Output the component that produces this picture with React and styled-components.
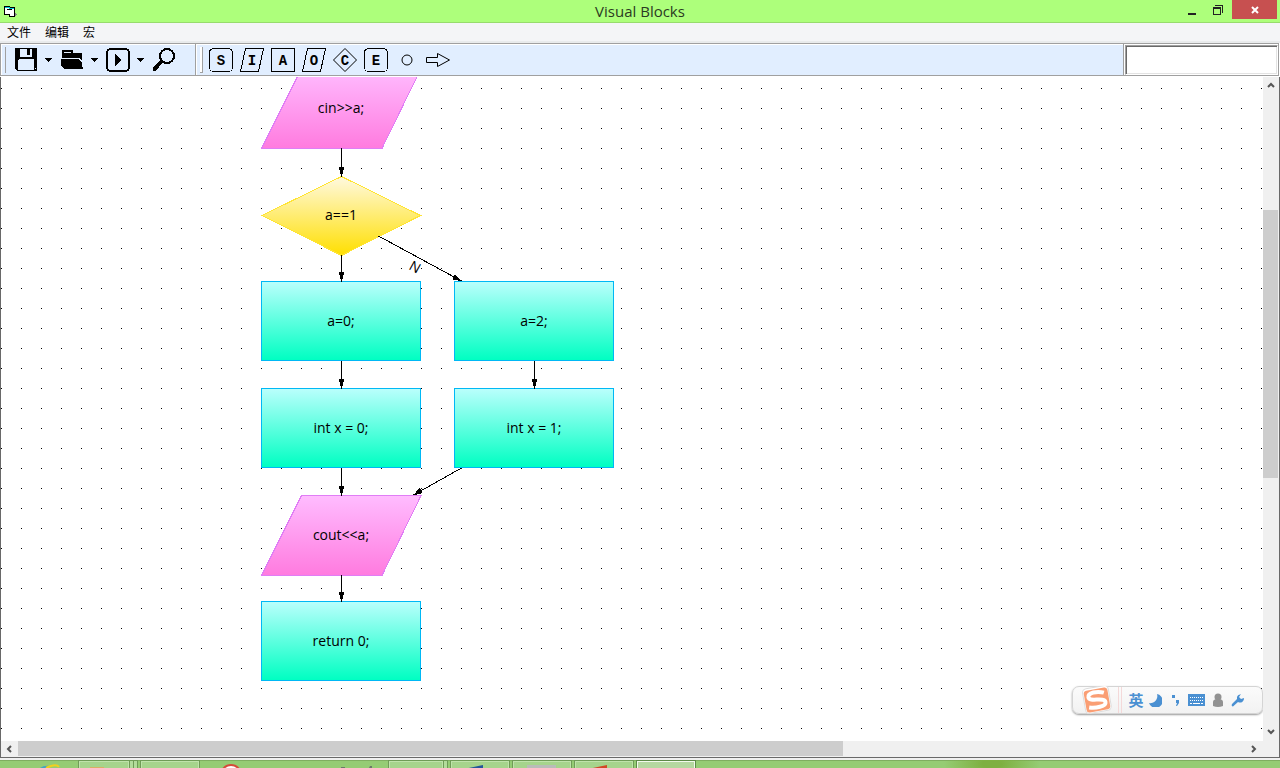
import React from "react";
import styled, { createGlobalStyle, css } from "styled-components";

const ui = '"Open Sans", "Noto Sans", "Noto Sans CJK SC", sans-serif';

const GlobalStyle = createGlobalStyle`
  * { box-sizing: border-box; }
  body { margin: 0; background: #fff; color: #000; font: 12px/18px ${ui}; }
  button, input { font: inherit; color: inherit; }
  button { padding: 0; border: 0; background: none; }
  svg { display: block; }
`;

const Window = styled.div`
  display: flex;
  flex-direction: column;
  height: 100vh;
  overflow: hidden;
`;

const TitleBar = styled.header`
  display: grid;
  grid-template-columns: 1fr auto 1fr;
  flex: none;
  height: 23px;
  padding: 0 3px;
  background: #adff7b;
  border-bottom: 1px solid #97dc6d;
`;

const AppIcon = styled.div`
  padding-top: 4px;
`;

const Title = styled.h1`
  margin: 0;
  font-size: 15px;
  font-weight: 400;
  line-height: 22px;
  color: #2b3a22;
`;

const WindowControls = styled.div`
  display: flex;
  justify-content: flex-end;
`;

const ControlButton = styled.button`
  width: ${(p) => (p.$close ? 45 : 26)}px;
  height: 19px;
  padding-right: ${(p) => (p.$close ? 0 : 2)}px;
  background: ${(p) => (p.$close ? "#c75050" : "transparent")};
  svg { margin: 0 auto; }
`;

const MenuBar = styled.nav`
  display: flex;
  flex: none;
  height: 20px;
  background: #f4f5f7;
  border-bottom: 2px solid #e9ebec;
`;

const MenuItem = styled.button`
  padding: 0 7px;
  font-size: 12px;
  line-height: 20px;
`;

const ToolBar = styled.div`
  display: flex;
  flex: none;
  height: 33px;
  margin: 0 1px 1px 0;
  border: 1px solid #a0a0a0;
  background: #e1eeff;
`;

const Band = styled.div`
  display: flex;
  align-items: center;
  flex: ${(p) => (p.$grow ? "1" : "none")};
  padding: 0 26px 0 3px;
  border: solid #fff;
  border-width: 1px 0 0 1px;
  ${(p) => !p.$grow && css`width: 194px;`}
`;

const BandEnd = styled.div`
  width: 1px;
  background: #a0a0a0;
`;

const Grip = styled.div`
  width: 3px;
  height: 26px;
  margin-right: ${(p) => p.$space}px;
  border: solid #a0a0a0;
  border-width: 0 1px 1px 0;
  background: #fff;
`;

const ToolButton = styled.button`
  flex: none;
  width: 24px;
  height: 24px;
`;

const ShapeSlot = styled.div`
  display: flex;
  flex: none;
  width: 31px;
`;

const CaretButton = styled.button`
  flex: none;
  width: 22px;
  height: 24px;
  padding-right: 2px;
  svg { margin: 0 auto; }
`;

const SearchWrap = styled.div`
  flex: none;
  width: 154px;
  padding: 1px 0 0 1px;
  background: #fff;
`;

const SearchInput = styled.input`
  display: block;
  width: 100%;
  height: 30px;
  padding: 0 4px;
  border: 1px solid;
  border-color: #a0a0a0 #fff #fff #a0a0a0;
  box-shadow: inset 1px 1px #696969, inset -1px -1px #e3e3e3;
  outline: 0;
  background: #fff;
`;

const Workspace = styled.main`
  display: grid;
  flex: 1;
  min-height: 0;
  grid-template: minmax(0, 1fr) 16px / minmax(0, 1fr) 16px;
  border: solid #696969;
  border-width: 0 1px 1px;
  background: #f0f0f0;
`;

const Canvas = styled.section`
  position: relative;
  overflow: hidden;
  background: #fff;
`;

const Layer = styled.svg`
  position: absolute;
  inset: 0;
  width: 100%;
  height: 100%;
`;

const Node = styled.div`
  position: absolute;
  left: ${(p) => p.$x}px;
  top: ${(p) => p.$y}px;
  display: flex;
  align-items: center;
  justify-content: center;
  width: 160px;
  height: 80px;
  font-size: 14px;
  line-height: 18px;
  ${(p) => p.$kind === "process" && css`
    border: 1px solid #00b8f5;
    background: linear-gradient(#b9fffc, #00ffc2);
  `}
`;

const NodeText = styled.span`
  position: relative;
`;

const ScrollBar = styled.div`
  display: flex;
  flex-direction: ${(p) => (p.$vertical ? "column" : "row")};
  padding: ${(p) => (p.$vertical ? "0 1px 0 0" : "0 0 1px")};
`;

const ScrollButton = styled.button`
  display: flex;
  align-items: center;
  justify-content: center;
  flex: none;
  width: ${(p) => (p.$vertical ? 15 : 17)}px;
  height: ${(p) => (p.$vertical ? 17 : 15)}px;
  padding: ${(p) => (p.$vertical ? "0 0 2px" : "0 2px 0 0")};
`;

const Track = styled.div`
  display: flex;
  flex-direction: ${(p) => (p.$vertical ? "column" : "row")};
  flex: 1;
`;

const Gap = styled.div`
  flex: ${(p) => p.$share};
`;

const Thumb = styled.div`
  flex: ${(p) => p.$share};
  background: #cdcdcd;
`;

const ImeBar = styled.div`
  position: absolute;
  right: 0;
  bottom: 27px;
  display: flex;
  align-items: center;
  width: 191px;
  height: 28px;
  padding-left: 7px;
  border: 1px solid #d4d4d4;
  border-radius: 7px;
  background: linear-gradient(#fbfbfb, #f2f2f2);
  box-shadow: 0 1px 2px #999;
  color: #4a90d2;
`;

const ImeDivider = styled.div`
  width: 4px;
  height: 26px;
  margin: 0 6px 0 4px;
  border: solid #f4d9d9;
  border-width: 0 1px;
`;

const ImeButton = styled.button`
  display: flex;
  align-items: center;
  justify-content: center;
  width: ${(p) => p.$width}px;
  height: 24px;
  font: 700 15px/24px "Noto Sans CJK SC", sans-serif;
  color: #4a90d2;
`;

const TaskBar = styled.footer`
  display: flex;
  gap: 2px;
  flex: none;
  height: 10px;
  padding-left: 16px;
  overflow: hidden;
  border-top: 2px solid #f0f0f0;
  background:
    radial-gradient(ellipse 48px 20px at 992px 4px, #7eb041 20%, transparent),
    linear-gradient(#7fae60 1px, #95cc74 1px);
`;

const frame = {
  none: "",
  open: css`
    border: 1px solid #6f9c56;
    background: #a6d48c;
    box-shadow: inset 0 0 0 1px #bfe3aa;
  `,
  active: css`
    border: 1px solid #5d8a47;
    background: #b5d8a0;
    box-shadow: inset 0 0 0 1px #f2faec;
  `,
};

const TaskButton = styled.button`
  display: flex;
  justify-content: center;
  flex: none;
  width: 60px;
  height: 40px;
  ${(p) => frame[p.$state]}
`;

const StackedTask = styled.div`
  display: flex;
  flex: none;
  width: 60px;
  height: 40px;
`;

const StackTab = styled.span`
  width: 4px;
  border: solid #6f9c56;
  border-width: 1px 1px 0 0;
  background: #b3dc9b;
`;

const StackFront = styled(TaskButton)`
  width: ${(p) => (p.$tabs === 2 ? 52 : 56)}px;
`;

function Caret() {
  return (
    <svg width="7" height="4" shapeRendering="crispEdges" aria-hidden="true">
      <path d="M0 0h7v1H0zM1 1h5v1H1zM2 2h3v1H2zM3 3h1v1H3z" />
    </svg>
  );
}

function Icon({ children, crisp = true }) {
  return (
    <svg width="24" height="24" viewBox="0 0 24 24" shapeRendering={crisp ? "crispEdges" : "auto"} aria-hidden="true">
      {children}
    </svg>
  );
}

const SaveIcon = () => (
  <Icon>
    <path fillRule="evenodd" d="M1 0h22v23H3l-2-2zM6 1v8h12V1zM4 12v10h16V12l-1-1H5zM21 20v1h1v-1z" />
    <path d="M13 1h3v6h-3z" />
  </Icon>
);

const OpenIcon = () => (
  <Icon>
    <path fillRule="evenodd" d="M2 2h11v3h9v7H2zM4 4v1h7V4z" />
    <path d="M1 11h18l4 3v7H4l-3-4z" />
    <path d="M2 10h17l3 4v5" fill="none" stroke="#e1eeff" />
  </Icon>
);

const RunIcon = () => (
  <Icon>
    <rect x="1" y="1" width="22" height="22" rx="4" fill="none" stroke="#000" strokeWidth="2" />
    <path d="M9 6l7 6-7 6z" />
  </Icon>
);

const FindIcon = () => (
  <Icon>
    <circle cx="15" cy="8" r="7" fill="none" stroke="#000" strokeWidth="2" />
    <path d="M9 12l2 2-7 9H1v-4z" />
  </Icon>
);

const outlines = {
  round: <rect x="0.5" y="0.5" width="23" height="23" rx="4" />,
  slant: <path d="M5.5 0.5h18l-5 23h-18z" />,
  square: <rect x="0.5" y="0.5" width="23" height="23" />,
  diamond: <path d="M12 0.5L23.5 12 12 23.5 0.5 12z" />,
  circle: <circle cx="12" cy="12" r="5" />,
  arrow: <path d="M0.5 9.5h11v-4L23.5 12l-12 6.500v-4h-11z" />,
};

function ShapeIcon({ shape, letter }) {
  return (
    <Icon crisp={shape !== "circle" && shape !== "arrow" && shape !== "diamond"}>
      <g fill="none" stroke="#000">{outlines[shape]}</g>
      {letter && (
        <text x="12" y="17" textAnchor="middle" fontFamily='"Liberation Mono", monospace' fontSize="14" fontWeight="700">
          {letter}
        </text>
      )}
    </Icon>
  );
}

const shapeTools = [
  ["round", "S", "Start"],
  ["slant", "I", "Input"],
  ["square", "A", "Action"],
  ["slant", "O", "Output"],
  ["diamond", "C", "Condition"],
  ["round", "E", "End"],
  ["circle", "", "Joint"],
  ["arrow", "", "Arrow"],
];

const nodes = [
  ["data", 260, -9, "cin>>a;"],
  ["decision", 260, 98, "a==1"],
  ["process", 260, 204, "a=0;"],
  ["process", 453, 204, "a=2;"],
  ["process", 260, 311, "int x = 0;"],
  ["process", 453, 311, "int x = 1;"],
  ["data", 260, 418, "cout<<a;"],
  ["process", 260, 524, "return 0;"],
];

const links = [
  [340, 71, 340, 99],
  [340, 178, 340, 204],
  [377, 159, 460, 204],
  [340, 284, 340, 311],
  [533, 284, 533, 311],
  [340, 391, 340, 418],
  [460, 391, 412, 418],
  [340, 498, 340, 524],
];

function Backdrop({ kind }) {
  if (kind === "process") return null;
  return (
    <Layer viewBox="0 0 160 80" overflow="visible" shapeRendering="crispEdges" aria-hidden="true">
      {kind === "data" ? (
        <path d="M40.500 0.5H160L121 80.500H0.5z" fill="url(#pink)" stroke="#e07df5" />
      ) : (
        <path d="M80.500 1.5L159.500 40.500L80.500 80.500L1 40.500z" fill="url(#gold)" stroke="#ffe433" />
      )}
    </Layer>
  );
}

function Flowchart() {
  return (
    <>
      <Layer aria-hidden="true" shapeRendering="crispEdges">
        <defs>
          <pattern id="dots" width="20" height="20" patternUnits="userSpaceOnUse">
            <rect x="0" y="11" width="1" height="1" />
          </pattern>
          <linearGradient id="pink" x2="0" y2="1">
            <stop stopColor="#ffbcff" />
            <stop offset="1" stopColor="#ff7bdf" />
          </linearGradient>
          <linearGradient id="gold" x2="0" y2="1">
            <stop stopColor="#fff9e0" />
            <stop offset="1" stopColor="#ffdf00" />
          </linearGradient>
          <marker id="head" viewBox="0 0 10 6" refX="9" refY="3" markerWidth="10" markerHeight="6" markerUnits="userSpaceOnUse" orient="auto">
            <path d="M0 0L10 3L0 6z" />
          </marker>
        </defs>
        <rect width="100%" height="100%" fill="url(#dots)" />
      </Layer>
      {nodes.map(([kind, x, y, text]) => (
        <Node key={text} $kind={kind} $x={x} $y={y}>
          <Backdrop kind={kind} />
          <NodeText>{text}</NodeText>
        </Node>
      ))}
      <Layer shapeRendering="crispEdges">
        <g transform="translate(0.5 0)" stroke="#000">
          {links.map(([x1, y1, x2, y2]) => (
            <line key={`${x1}-${y1}`} x1={x1} y1={y1} x2={x2} y2={y2} markerEnd="url(#head)" />
          ))}
        </g>
        <text x="414" y="195" textAnchor="middle" fontSize="14" transform="rotate(29 414 190)">N</text>
      </Layer>
    </>
  );
}

const chevrons = {
  up: "M1 6l3-3 3 3",
  down: "M1 2l3 3 3-3",
  left: "M6 1L3 4l3 3",
  right: "M2 1l3 3-3 3",
};

function Chevron({ to }) {
  return (
    <svg width="8" height="8" viewBox="0 0 8 8" aria-hidden="true">
      <path d={chevrons[to]} fill="none" stroke="#555" strokeWidth="2" />
    </svg>
  );
}

function Scroller({ vertical, before, size, after }) {
  const [start, end] = vertical ? ["up", "down"] : ["left", "right"];
  return (
    <ScrollBar $vertical={vertical}>
      <ScrollButton $vertical={vertical} aria-label={`Scroll ${start}`}><Chevron to={start} /></ScrollButton>
      <Track $vertical={vertical}>
        <Gap $share={before} />
        <Thumb $share={size} />
        <Gap $share={after} />
      </Track>
      <ScrollButton $vertical={vertical} aria-label={`Scroll ${end}`}><Chevron to={end} /></ScrollButton>
    </ScrollBar>
  );
}

function Ime() {
  return (
    <ImeBar>
      <svg width="34" height="28" viewBox="0 0 34 28" aria-hidden="true">
        <g transform="rotate(-10 17 14)">
          <rect x="4" y="1" width="26" height="25" rx="4" fill="#fff" stroke="#ddd" />
          <rect x="5" y="3" width="24" height="22" rx="3" fill="#fa9e74" />
          <path d="M25 8C19 5 9 5 9 10C9 15 25 12 25 17.500C25 22 14 22 8 20" fill="none" stroke="#fff" strokeWidth="4" />
        </g>
      </svg>
      <ImeDivider />
      <ImeButton $width={16} aria-label="英文">英</ImeButton>
      <ImeButton $width={23} aria-label="Moon">
        <svg width="13" height="13" viewBox="0 0 13 13"><path d="M8 0A7 7 0 1 1 0 9A7 7 0 0 0 8 0z" fill="currentColor" /></svg>
      </ImeButton>
      <ImeButton $width={17} aria-label="Punctuation">
        <svg width="9" height="12" viewBox="0 0 9 12"><path d="M1 1h3v3H1zM5 6h3v3L6 12H5l1-3H5z" fill="currentColor" /></svg>
      </ImeButton>
      <ImeButton $width={25} aria-label="Keyboard">
        <svg width="17" height="12" viewBox="0 0 17 12" shapeRendering="crispEdges">
          <rect width="17" height="12" rx="1" fill="currentColor" />
          <path d="M2 3.500h14M2 6.500h14" stroke="#fff" strokeDasharray="1 1" />
          <path d="M2 9.500h2m1 0h7m1 0h2" stroke="#fff" />
        </svg>
      </ImeButton>
      <ImeButton $width={18} aria-label="Account">
        <svg width="12" height="14" viewBox="0 0 12 14" fill="#929292"><circle cx="6" cy="4" r="3.500" /><path d="M1 13V9Q1 6 6 6T11 9v4q-5 2-10 0z" /></svg>
      </ImeButton>
      <ImeButton $width={21} aria-label="Tools">
        <svg width="14" height="14" viewBox="0 0 14 14">
          <path d="M12 1L9 4M9 1.500A4 4 0 0 0 6 6L1 11Q0 13 2 13.500L7 9A4 4 0 0 0 13 5L10 6 8 4 10 1z" fill="currentColor" />
        </svg>
      </ImeButton>
    </ImeBar>
  );
}

function TaskIcon({ children }) {
  return <svg width="40" height="8" viewBox="0 0 40 8" aria-hidden="true">{children}</svg>;
}

function Tasks() {
  return (
    <TaskBar>
      <TaskButton $state="none" aria-label="Internet browser">
        <TaskIcon>
          <path d="M14 8Q18 5 25 6l-3 2z" fill="#3fa3c8" />
          <path d="M20 8Q30 3 33 7" fill="none" stroke="#f2cf1d" strokeWidth="2" />
        </TaskIcon>
      </TaskButton>
      <StackedTask>
        <StackFront $state="open" $tabs={2} aria-label="Folders"><TaskIcon><path d="M6 6h14v2H6z" fill="#d9ae63" /></TaskIcon></StackFront>
        <StackTab /><StackTab />
      </StackedTask>
      <TaskButton $state="open" aria-label="Application" />
      <TaskButton $state="none" aria-label="Media">
        <TaskIcon><circle cx="19" cy="15" r="10" fill="#fff" stroke="#d64a3a" strokeWidth="2" /></TaskIcon>
      </TaskButton>
      <TaskButton $state="none" aria-label="Notes" />
      <TaskButton $state="none" aria-label="Utility">
        <TaskIcon><path d="M5 7h4v1H5zM34 6h2v2h-3z" fill="#697b68" /></TaskIcon>
      </TaskButton>
      <StackedTask>
        <StackFront $state="open" $tabs={1} aria-label="Documents" />
        <StackTab />
      </StackedTask>
      <TaskButton $state="open" aria-label="Word processor"><TaskIcon><path d="M4 8l19-4v4z" fill="#24569b" /></TaskIcon></TaskButton>
      <TaskButton $state="open" aria-label="Editor"><TaskIcon><path d="M5 4h29v4H5z" fill="#b9bcb8" /></TaskIcon></TaskButton>
      <TaskButton $state="open" aria-label="Presentation"><TaskIcon><path d="M4 8l19-4v4z" fill="#d24726" /></TaskIcon></TaskButton>
      <TaskButton $state="active" aria-label="Visual Blocks" />
    </TaskBar>
  );
}

const fileTools = [
  ["Save", SaveIcon],
  ["Open", OpenIcon],
  ["Run", RunIcon],
];

export default function App() {
  return (
    <Window>
      <GlobalStyle />
      <TitleBar>
        <AppIcon>
          <svg width="14" height="14" viewBox="0 0 14 14" shapeRendering="crispEdges" aria-hidden="true">
            <path d="M11 8l3 2-3 3z" fill="#808080" />
            <path d="M1.500 2.500h5v1h5v9h-5v-2h-5z" fill="#fff" stroke="#000" />
            <path d="M2 3h5v1h4v1H6V4H2z" fill="#00c8d8" />
            <path d="M4 5.500h5" stroke="#000" />
          </svg>
        </AppIcon>
        <Title>Visual Blocks</Title>
        <WindowControls>
          <ControlButton aria-label="Minimize">
            <svg width="8" height="14"><path d="M0 10h8v2H0z" fill="#222" /></svg>
          </ControlButton>
          <ControlButton aria-label="Restore">
            <svg width="10" height="12" fill="none" stroke="#222" shapeRendering="crispEdges">
              <path d="M0.500 3.500h7v7h-7zM0 4.500h8M2 1.500h7.500V9" />
            </svg>
          </ControlButton>
          <ControlButton $close aria-label="Close">
            <svg width="8" height="8" stroke="#fff" strokeWidth="2"><path d="M1 1l6 6M7 1L1 7" /></svg>
          </ControlButton>
        </WindowControls>
      </TitleBar>
      <MenuBar>
        <MenuItem>文件</MenuItem>
        <MenuItem>编辑</MenuItem>
        <MenuItem>宏</MenuItem>
      </MenuBar>
      <ToolBar>
        <Band>
          <Grip $space={8} />
          {fileTools.map(([name, Glyph]) => (
            <React.Fragment key={name}>
              <ToolButton aria-label={name}><Glyph /></ToolButton>
              <CaretButton aria-label={`${name} options`}><Caret /></CaretButton>
            </React.Fragment>
          ))}
          <ToolButton aria-label="Find"><FindIcon /></ToolButton>
        </Band>
        <BandEnd />
        <Band $grow>
          <Grip $space={6} />
          {shapeTools.map(([shape, letter, name]) => (
            <ShapeSlot key={name}>
              <ToolButton aria-label={name}><ShapeIcon shape={shape} letter={letter} /></ToolButton>
            </ShapeSlot>
          ))}
        </Band>
        <BandEnd />
        <SearchWrap>
          <SearchInput aria-label="Search" />
        </SearchWrap>
      </ToolBar>
      <Workspace>
        <Canvas>
          <Flowchart />
          <Ime />
        </Canvas>
        <Scroller vertical before={116} size={268} after={246} />
        <Scroller before={0} size={825} after={403} />
      </Workspace>
      <Tasks />
    </Window>
  );
}
